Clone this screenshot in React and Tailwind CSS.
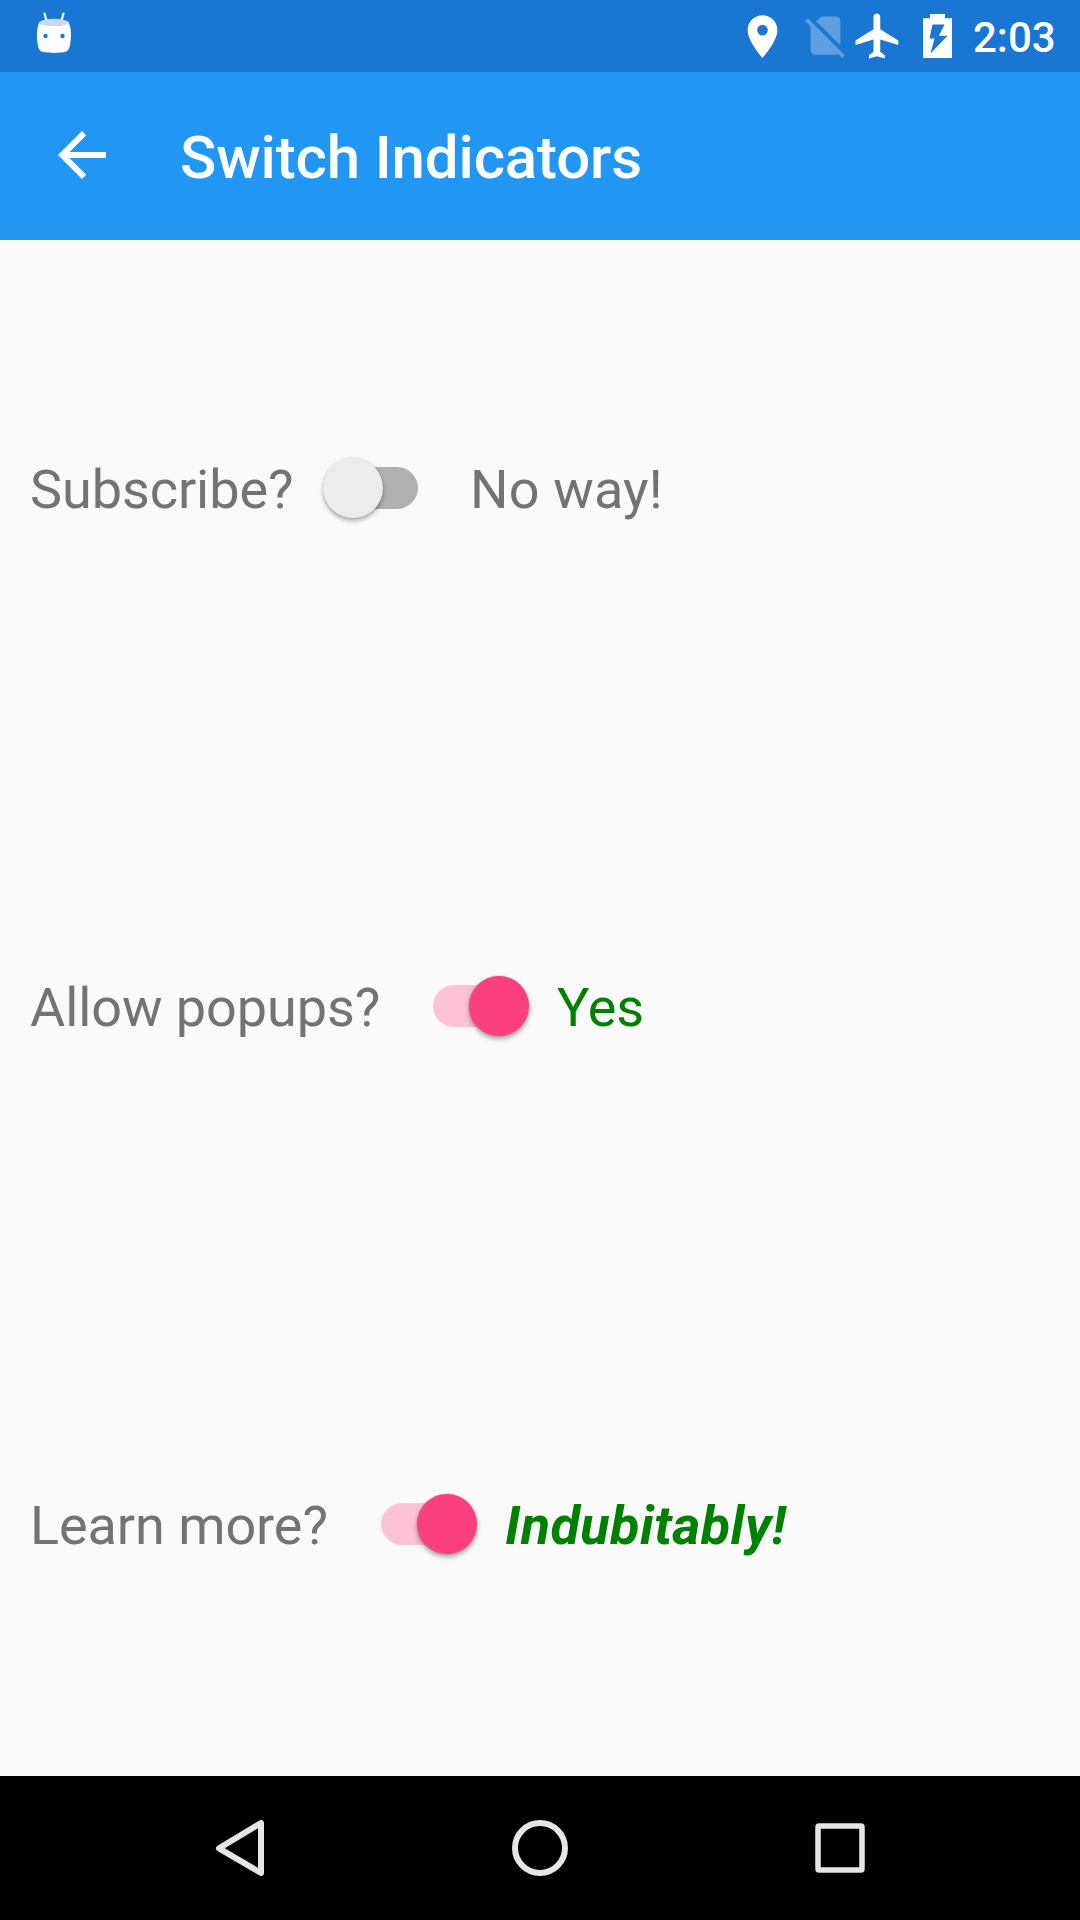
function StatusBar() {
  return (
    <div className="flex h-[72px] items-start bg-[#1976d2] text-white">
      <svg className="mt-[10px] ml-[35px] h-12 w-[38px]" viewBox="0 0 38 48" fill="white">
        <path d="M9.300 2.800L11.800 12M28.700 2.800L26.200 12" stroke="white" strokeWidth="2.200" />
        <path d="M5 11.500C2 16 1.500 24 2.300 31C2.800 36 3.600 39.500 5.500 41C9 43.500 28.500 43.500 32 41C34.300 39.500 35.200 36 35.600 31C36.400 24 36 16 33 11.500C31 17.500 7 17.500 5 11.500Z" />
        <ellipse cx="19" cy="12.500" rx="14.500" ry="3.700" fill="#c6dbf3" />
        <circle cx="10.500" cy="26" r="2.200" fill="#1976d2" />
        <circle cx="27.500" cy="26" r="2.200" fill="#1976d2" />
      </svg>
      <svg className="mt-[10.500px] ml-[664px] size-[51px]" viewBox="0 0 24 24" fill="white">
        <path d="M12 2C8.130 2 5 5.130 5 9c0 5.250 7 13 7 13s7-7.750 7-13c0-3.870-3.130-7-7-7zm0 9.500a2.500 2.500 0 0 1 0-5 2.500 2.500 0 0 1 0 5z" />
      </svg>
      <svg className="mt-[10px] ml-[12px] size-[51px] opacity-30" viewBox="0 0 24 24" fill="white">
        <path d="M18.990 5c0-1.100-.890-2-1.990-2h-7L7.660 5.340 19 16.680 18.990 5zM3.650 3.880L2.380 5.150 5 7.770V19c0 1.100.900 2 2 2h10.010c.350 0 .670-.100.960-.260l1.880 1.880 1.270-1.270L3.650 3.880z" />
      </svg>
      <svg className="mt-[8.500px] size-[54px]" viewBox="0 0 24 24" fill="white">
        <path d="M21 16v-2l-8-5V3.500c0-.830-.670-1.500-1.500-1.500S10 2.670 10 3.500V9l-8 5v2l8-2.500V19l-2 1.500V22l3.500-1 3.500 1v-1.500L13 19v-5.500l8 2.500z" />
      </svg>
      <svg className="mt-[14px] ml-[18px] h-[44px] w-[29px]" viewBox="0 0 29 44" fill="white">
        <path fillRule="evenodd" d="M7 0H22V4.200H29V44H0V4.200H7ZM9.500 10.500L6.500 24.500H11.500L7.500 39.500L24.500 21.800H16L21.500 10.500Z" />
      </svg>
      <span className="mt-[14px] ml-[21px] text-[42px] leading-[48px] font-medium">2:03</span>
    </div>
  );
}

function AppBar() {
  return (
    <header className="flex h-[168px] items-center bg-[#2196f3] text-white">
      <svg className="mb-[2px] ml-[46px] size-[72px]" viewBox="0 0 24 24" fill="white">
        <path d="M20 11H7.830l5.590-5.590L12 4l-8 8 8 8 1.410-1.410L7.830 13H20v-2z" />
      </svg>
      <h1 className="mt-[4px] ml-[62px] text-[60px] leading-[70px] font-medium tracking-[-0.14px]">Switch Indicators</h1>
    </header>
  );
}

function Switch({ on }) {
  return (
    <div
      role="switch"
      aria-checked={on}
      className={
        on
          ? "mt-[2px] flex h-[42px] w-24 shrink-0 items-center justify-end rounded-full bg-[linear-gradient(90deg,#fdc2d6_80%,transparent_80%)]"
          : "mt-[2px] flex h-[42px] w-24 shrink-0 items-center justify-start rounded-full bg-[linear-gradient(270deg,#b0b0b0_80%,transparent_80%)]"
      }
    >
      <div
        className={
          on
            ? "mr-[0.500px] -mt-px size-[60px] shrink-0 rounded-full bg-[#fc407f] shadow-[0_3px_5px_rgba(0,0,0,0.35),0_0_2px_rgba(0,0,0,0.2)]"
            : "ml-[0.500px] -mt-px size-[60px] shrink-0 rounded-full bg-[#ececec] shadow-[0_3px_4px_rgba(0,0,0,0.3),0_0_2px_rgba(0,0,0,0.15)]"
        }
      />
    </div>
  );
}

const rows = [
  { label: "Subscribe?", on: false, value: "No way!", labelClass: "w-[292px]", valueClass: "ml-[52px] tracking-[0.15px]" },
  { label: "Allow popups?", on: true, value: "Yes", labelClass: "w-[403px]", valueClass: "ml-[28px] text-[#008000]" },
  { label: "Learn more?", on: true, value: "Indubitably!", labelClass: "w-[351px]", valueClass: "ml-[28px] font-bold italic tracking-[0.4px] text-[#008000]" },
];

function NavBar() {
  return (
    <nav className="flex h-36 items-center justify-between bg-black px-[204px]">
      <svg className="size-[72px]" viewBox="0 0 72 72" fill="none" stroke="#e6e6e6" strokeWidth="6" strokeLinejoin="round">
        <path d="M57 11V61L15 36.300Z" />
      </svg>
      <svg className="size-[72px]" viewBox="0 0 72 72" fill="none" stroke="#e6e6e6" strokeWidth="6">
        <circle cx="36" cy="36" r="25" />
      </svg>
      <svg className="size-[72px]" viewBox="0 0 72 72" fill="none" stroke="#e6e6e6" strokeWidth="5.500" strokeLinejoin="round">
        <rect x="14" y="14" width="44" height="44" rx="1" />
      </svg>
    </nav>
  );
}

export default function App() {
  return (
    <div className="flex h-[1920px] w-[1080px] flex-col bg-[#fafafa] font-['Roboto',sans-serif]">
      <StatusBar />
      <AppBar />
      <main className="flex flex-1 flex-col gap-[400px] pt-[188px]">
        {rows.map((row) => (
          <div key={row.label} className="flex h-[118px] shrink-0 items-center pl-[30px] text-[54px] leading-[64px] text-[#737373]">
            <span className={`mt-[6px] shrink-0 whitespace-nowrap tracking-[-0.08px] ${row.labelClass}`}>{row.label}</span>
            <Switch on={row.on} />
            <span className={`mt-[6px] whitespace-nowrap ${row.valueClass}`}>{row.value}</span>
          </div>
        ))}
      </main>
      <NavBar />
    </div>
  );
}
